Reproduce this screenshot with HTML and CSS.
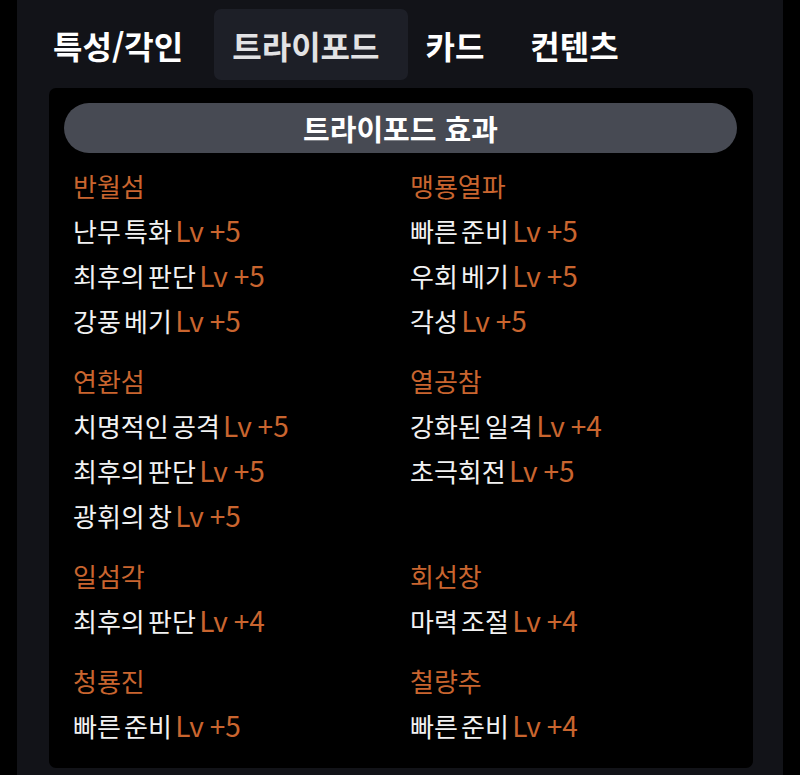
FILE: index.html
```html
<!DOCTYPE html>
<html lang="ko">
<head>
  <meta charset="UTF-8">
  <meta name="viewport" content="width=device-width, initial-scale=1.0">
  <title>트라이포드</title>
  <link rel="stylesheet" href="styles.css">
</head>
<body>
  <div class="panel">
    <div class="tabs">
      <div class="tab">특성/각인</div>
      <div class="tab active">트라이포드</div>
      <div class="tab">카드</div>
      <div class="tab">컨텐츠</div>
    </div>

    <div class="card">
      <div class="card-title">트라이포드 효과</div>
      <div class="grid">
        <div class="group">
          <div class="skill">반월섬</div>
          <div class="item">난무 특화 <span class="lv">Lv +5</span></div>
          <div class="item">최후의 판단 <span class="lv">Lv +5</span></div>
          <div class="item">강풍 베기 <span class="lv">Lv +5</span></div>
        </div>
        <div class="group">
          <div class="skill">맹룡열파</div>
          <div class="item">빠른 준비 <span class="lv">Lv +5</span></div>
          <div class="item">우회 베기 <span class="lv">Lv +5</span></div>
          <div class="item">각성 <span class="lv">Lv +5</span></div>
        </div>
        <div class="group">
          <div class="skill">연환섬</div>
          <div class="item">치명적인 공격 <span class="lv">Lv +5</span></div>
          <div class="item">최후의 판단 <span class="lv">Lv +5</span></div>
          <div class="item">광휘의 창 <span class="lv">Lv +5</span></div>
        </div>
        <div class="group">
          <div class="skill">열공참</div>
          <div class="item">강화된 일격 <span class="lv">Lv +4</span></div>
          <div class="item">초극회전 <span class="lv">Lv +5</span></div>
        </div>
        <div class="group">
          <div class="skill">일섬각</div>
          <div class="item">최후의 판단 <span class="lv">Lv +4</span></div>
        </div>
        <div class="group">
          <div class="skill">회선창</div>
          <div class="item">마력 조절 <span class="lv">Lv +4</span></div>
        </div>
        <div class="group">
          <div class="skill">청룡진</div>
          <div class="item">빠른 준비 <span class="lv">Lv +5</span></div>
        </div>
        <div class="group">
          <div class="skill">철량추</div>
          <div class="item">빠른 준비 <span class="lv">Lv +4</span></div>
        </div>
      </div>
    </div>
  </div>
</body>
</html>
```

FILE: styles.css
```css
html, body {
  margin: 0;
  padding: 0;
  background: #000;
}

body {
  font-family: "Noto Sans CJK KR", "Noto Sans", sans-serif;
  color: #f2f2f2;
}

.panel {
  margin-left: 17px;
  width: 766px;
  min-height: 775px;
  box-sizing: border-box;
  padding: 9px 30px 0 19px;
  background: #121318;
}

.tabs {
  display: flex;
  gap: 12px;
}

.tab {
  height: 71px;
  padding: 0 17px;
  display: flex;
  align-items: center;
  font-size: 32px;
  font-weight: 700;
  color: #fff;
  border-radius: 7px;
}

/* active tab box is wider than its text in the original */
.tab.active {
  background: #1d1f27;
  color: #e2e2e4;
  padding: 0 29px 0 18px;
  margin: 0 -12px 0 2px;
}

.card {
  margin: 8px 0 0 13px;
  background: #000;
  border-radius: 7px;
  padding: 15px 16px 20px 15px;
}

.card-title {
  height: 50px;
  border-radius: 25px;
  background: #474a53;
  display: flex;
  align-items: center;
  justify-content: center;
  font-size: 29px;
  font-weight: 700;
  color: #fff;
}

.grid {
  display: grid;
  grid-template-columns: 1fr 1fr;
  column-gap: 18px;
  row-gap: 15px;
  padding: 10px 8px 0 9px;
}

.skill,
.item {
  font-size: 26px;
  line-height: 45px;
  white-space: nowrap;
  word-spacing: -4px;
}

.skill {
  color: #c9652f;
}

.lv {
  color: #c9652f;
  font-size: 28px;
  word-spacing: -2px;
}
```
